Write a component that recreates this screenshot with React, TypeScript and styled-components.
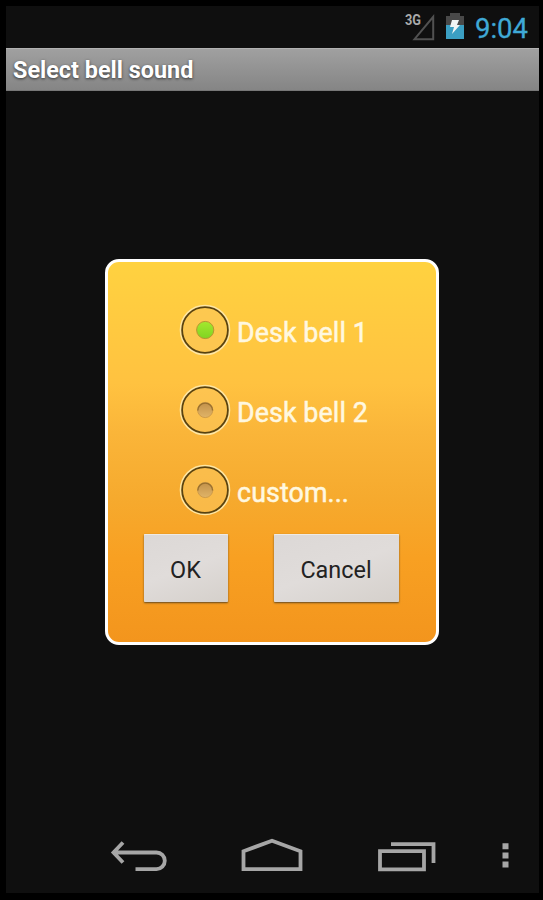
import React, { useState } from "react";
import styled, { createGlobalStyle } from "styled-components";

const GlobalStyle = createGlobalStyle`
  *, *::before, *::after { box-sizing: border-box; }
  body { margin: 0; background: #000; font-family: Roboto, sans-serif; }
`;

const Device = styled.div`
  width: 543px;
  height: 900px;
  padding: 6px 4.5px 7px 6px;
  background: #000;
`;

const Screen = styled.div`
  height: 100%;
  display: flex;
  flex-direction: column;
  background: #0f0f0f;
`;

const StatusBar = styled.header`
  height: 42px;
  display: flex;
  align-items: flex-start;
  justify-content: flex-end;
  padding: 6px 10.5px 0 0;
`;

const Clock = styled.time`
  margin: 0 0 0 11px;
  font-size: 27.5px;
  line-height: 33px;
  color: #3fa9d6;
  -webkit-text-stroke: 0.3px #3fa9d6;
`;

const BatteryIcon = styled.svg`
  margin-left: 10px;
`;

const TitleBar = styled.div`
  height: 43px;
  padding: 0 7px;
  border-top: 1px solid #b2b2b2;
  border-bottom: 1px solid #777;
  background: linear-gradient(#a0a0a0, #858585);
  color: #fff;
  font-size: 23.4px;
  font-weight: 700;
  line-height: 43px;
  text-shadow: 0 1px 3px rgba(0, 0, 0, 0.65);
`;

const Content = styled.main`
  flex: 1;
  padding: 168px 0 0 98.5px;
`;

const Dialog = styled.form`
  width: 334px;
  height: 386px;
  padding: 42px 0 0;
  border: 3.5px solid #fff;
  border-radius: 14px;
  background: linear-gradient(#ffd240, #ffc240 32%, #fab539 45%, #f6aa2e 62%, #f8a022 78%, #f3951d);
`;

const Option = styled.label`
  height: 80px;
  display: flex;
  align-items: flex-start;
  padding-left: 71px;
  cursor: pointer;
`;

const RadioInput = styled.input`
  appearance: none;
  display: none;
`;

const OptionText = styled.span`
  margin: 13px 0 0 6.5px;
  color: #fff8e0;
  font-size: 26.8px;
  line-height: 32px;
  letter-spacing: 0.1px;
  -webkit-text-stroke: 0.5px #fff8e0;
`;

const Actions = styled.div`
  display: flex;
  gap: 46px;
  margin-top: -10px;
  padding-left: 36px;
`;

const ActionButton = styled.button<{ $width: number }>`
  width: ${(p) => p.$width}px;
  height: 68px;
  padding: 3px 0 0;
  border: 0;
  border-radius: 1px;
  background: linear-gradient(160deg, #dcd8d6, #e0dcda 50%, #d5d0cb);
  box-shadow: inset 0 1px #eeeae5, 0 1px 2px rgba(92, 68, 33, 0.95);
  color: #222;
  font: 400 23.4px/28px Roboto, sans-serif;
`;

const NavBar = styled.nav`
  height: 74px;
  display: flex;
  align-items: flex-start;
  padding: 18px 0 0 102.5px;
`;

const NavButton = styled.button<{ $gap: number }>`
  display: block;
  padding: 0;
  border: 0;
  margin-left: ${(p) => p.$gap}px;
  background: none;
`;

const NavGlyph = styled.svg`
  display: block;
  fill: none;
  stroke: #a6a6a6;
  stroke-width: 3.8;
`;

function RadioMark({ checked }: { checked: boolean }) {
  return (
    <svg width="52" height="52" viewBox="0 0 52 52">
      <defs>
        <linearGradient id="hollow" x1="0" y1="0" x2="0" y2="1">
          <stop offset="0" stopColor="#c2914a" />
          <stop offset="1" stopColor="#e0b468" />
        </linearGradient>
        <linearGradient id="lit" x1="0" y1="0" x2="0" y2="1">
          <stop offset="0" stopColor="#a4e82e" />
          <stop offset="1" stopColor="#80d422" />
        </linearGradient>
      </defs>
      <circle cx="26" cy="26" r="24.1" fill="#fcc65b" fillOpacity=".6" stroke="#ffe6a2" strokeWidth="2.4" />
      <circle cx="26" cy="26" r="22.9" fill="none" stroke="#59420f" strokeWidth="1.8" />
      <circle cx="26.2" cy="26" r={checked ? 8.6 : 7.6} fill={checked ? "url(#lit)" : "url(#hollow)"} stroke={checked ? "#b59731" : "#cf9c4a"} />
      {!checked && <path d="M18.8 26.5a7.4 7.4 0 0 1 14.8 0" fill="none" stroke="#99702f" strokeWidth="1.4" />}
    </svg>
  );
}

const sounds = ["Desk bell 1", "Desk bell 2", "custom..."];

export default function App() {
  const [selected, setSelected] = useState(0);
  return (
    <Device>
      <GlobalStyle />
      <Screen>
        <StatusBar>
          <svg width="33" height="30" viewBox="0 0 33 30">
            <text x="2" y="13" textLength="16" lengthAdjust="spacingAndGlyphs" fill="#aaa" fontFamily="Roboto, sans-serif" fontSize="14.5" fontWeight="700">3G</text>
            <path d="M11.5 27.2H30.2V4.8Z" fill="none" stroke="#515151" strokeWidth="2" />
          </svg>
          <BatteryIcon width="18" height="30" viewBox="0 0 18 30">
            <path d="M0 4h4V1h10v3h4v10H0z" fill="#494949" />
            <path d="M0 13h18v14H0z" fill="#3b9fc3" />
            <path d="M6 8h7l-2 5h3l-8 9 2-7H4z" fill="#f1f5f5" />
          </BatteryIcon>
          <Clock>9:04</Clock>
        </StatusBar>
        <TitleBar>Select bell sound</TitleBar>
        <Content>
          <Dialog onSubmit={(e) => e.preventDefault()}>
            {sounds.map((sound, i) => (
              <Option key={sound}>
                <RadioInput type="radio" name="sound" checked={selected === i} onChange={() => setSelected(i)} />
                <RadioMark checked={selected === i} />
                <OptionText>{sound}</OptionText>
              </Option>
            ))}
            <Actions>
              <ActionButton $width={84}>OK</ActionButton>
              <ActionButton $width={125} type="button">Cancel</ActionButton>
            </Actions>
          </Dialog>
        </Content>
        <NavBar>
          <NavButton $gap={0} aria-label="Back">
            <NavGlyph width="60" height="38" viewBox="0 0 60 38">
              <path d="M14 5.5 4.5 15.5 14 25.5M4.5 15.5H47.5a8.3 8.3 0 0 1 0 16.6H26.5" />
            </NavGlyph>
          </NavButton>
          <NavButton $gap={71.5} aria-label="Home">
            <NavGlyph width="64" height="38" viewBox="0 0 64 38">
              <path d="M3.5 32.2V14.3L32 3.7 60.5 14.3V32.2Z" />
            </NavGlyph>
          </NavButton>
          <NavButton $gap={72} aria-label="Recent apps">
            <NavGlyph width="60" height="38" viewBox="0 0 60 38">
              <path d="M4 14.1H48V32.3H4zM15 7.2H57.5V26" />
            </NavGlyph>
          </NavButton>
          <NavButton $gap={61} aria-label="More options">
            <NavGlyph width="16" height="38" viewBox="0 0 16 38">
              <path d="M5.5 9.3h6M5.5 18.5h6M5.5 27.6h6" strokeWidth="6" />
            </NavGlyph>
          </NavButton>
        </NavBar>
      </Screen>
    </Device>
  );
}
